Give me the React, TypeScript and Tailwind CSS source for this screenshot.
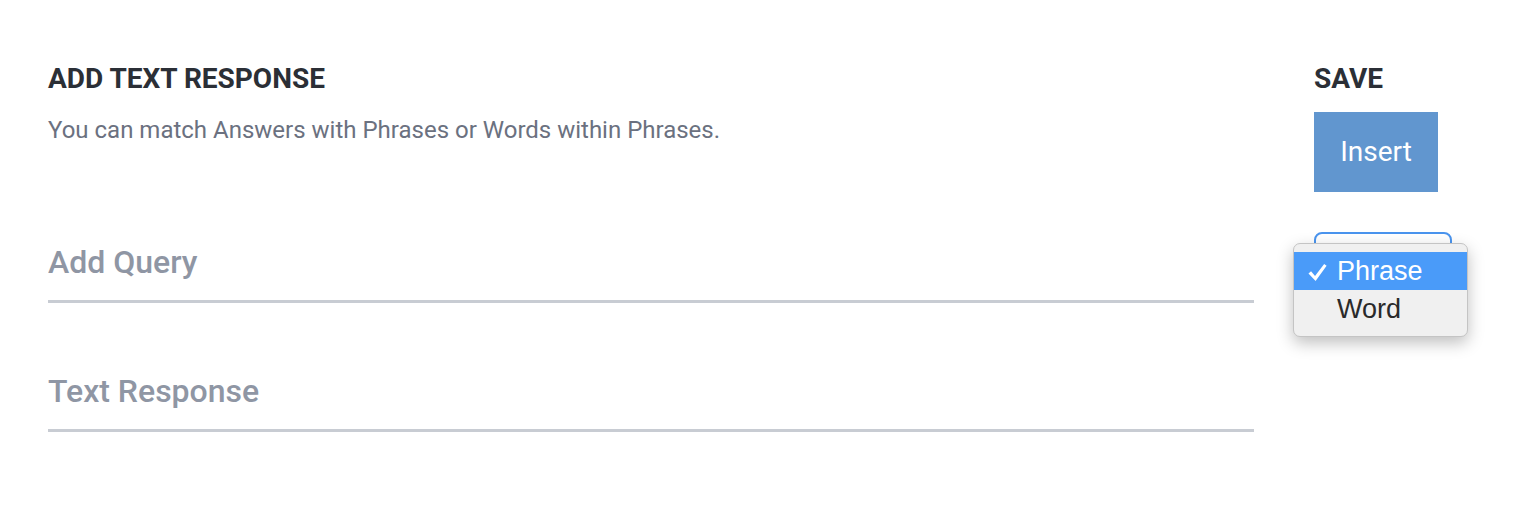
function Field({ placeholder, className }: { placeholder: string; className?: string }) {
  return (
    <div className={`border-b-[3px] border-[#c8ccd3] pb-[18px] ${className ?? ''}`}>
      <input
        type="text"
        placeholder={placeholder}
        className="block h-[40px] w-full bg-transparent text-[32px] font-medium leading-[40px] text-[#2b2f36] outline-none placeholder:text-[#8f96a4]"
      />
    </div>
  );
}

export default function App() {
  return (
    <div className="min-h-[516px] bg-white font-['Roboto',sans-serif]">
      <div className="flex gap-[60px] px-12 pt-[63px]">
        {/* Left column */}
        <div className="w-[1206px]">
          <h2 className="text-[28px] font-bold leading-[32px] text-[#2b2f36]">ADD TEXT RESPONSE</h2>
          <p className="mt-[21px] text-[24px] leading-[28px] text-[#6b7180]">
            You can match Answers with Phrases or Words within Phrases.
          </p>
          <Field placeholder="Add Query" className="mt-[98px]" />
          <Field placeholder="Text Response" className="mt-[68px]" />
        </div>

        {/* Right column */}
        <div className="relative w-[160px]">
          <h2 className="text-[28px] font-bold leading-[32px] text-[#2b2f36]">SAVE</h2>
          <button
            type="button"
            className="mt-[17px] flex h-[80px] w-[124px] items-center justify-center bg-[#6196cf] text-[28px] text-white"
          >
            Insert
          </button>
          <div className="mt-[40px] h-[48px] w-[138px] rounded-[8px] border-2 border-[#4a94ee] bg-white" />

          {/* Open select menu */}
          <div className="absolute left-[-21px] top-[180px] w-[175px] rounded-[7px] border border-[#c4c4c4] bg-[#f0f0f0] pb-[8px] pt-[8px] font-['Liberation_Sans',Helvetica,sans-serif] shadow-[0_6px_16px_rgba(0,0,0,0.25)]">
            <div className="flex h-[38px] items-center bg-[#4a9bf9] text-[27px] text-white">
              <span className="flex w-[43px] justify-center pl-[3px] pt-[2px]">
                <svg width="19" height="19" viewBox="0 0 20 20" fill="currentColor">
                  <polygon points="0.5,11 3.2,8.6 7.4,13.6 17,1 19.6,2.8 8,19" />
                </svg>
              </span>
              Phrase
            </div>
            <div className="flex h-[38px] items-center text-[27px] text-[#2a2a2a]">
              <span className="w-[43px]" />
              Word
            </div>
          </div>
        </div>
      </div>
    </div>
  );
}
